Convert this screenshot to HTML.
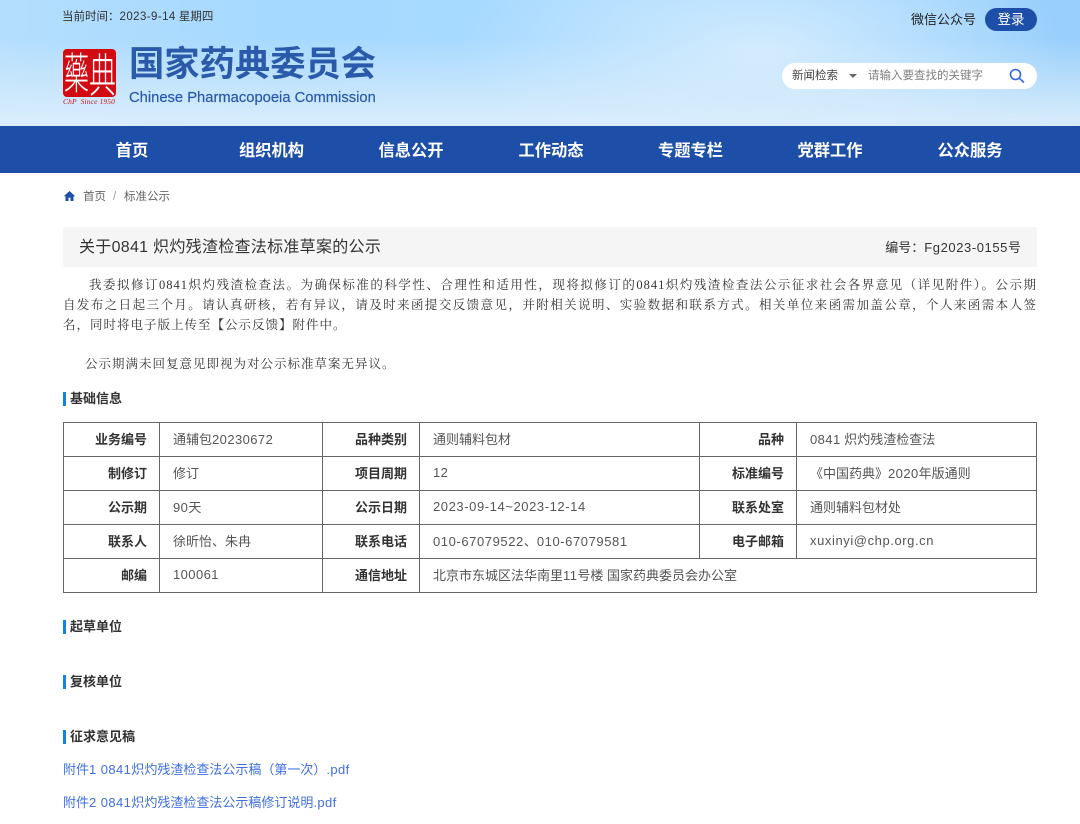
<!DOCTYPE html>
<html lang="zh"><head><meta charset="utf-8"><title>关于0841 炽灼残渣检查法标准草案的公示</title>
<style>
*{margin:0;padding:0;box-sizing:border-box}
html,body{width:1080px;height:824px;overflow:hidden;background:#fff}
body{position:relative;font-family:"Liberation Sans","Noto Sans CJK SC",sans-serif;color:#333}
.a{position:absolute;white-space:nowrap}
#hd{position:absolute;left:0;top:0;width:1080px;height:126px;background:linear-gradient(180deg,rgba(220,237,251,0) 30%,rgba(220,238,251,.9) 95%),radial-gradient(ellipse 300px 130px at 760px 50px,#d2ebfe 0,rgba(210,235,254,0) 100%),linear-gradient(90deg,#b4defd 0,#a6d9ff 25%,#a8daff 60%,#98cffb 100%)}
#nav{position:absolute;left:0;top:126px;width:1080px;height:47px;background:#1d4fa9}
#nav span{position:absolute;top:0;width:140px;text-align:center;line-height:50px;color:#fff;font-size:16.25px;font-weight:700}
.p{position:absolute;left:63px;width:974px;font-family:"Liberation Serif","Noto Serif CJK SC",serif;font-size:12.5px;letter-spacing:1px;color:#333;line-height:20px}
.h{position:absolute;left:63px;height:14px;border-left:3px solid #1a7fe0;padding-left:4px;font-size:13px;font-weight:700;line-height:14px;color:#333;white-space:nowrap}
table{position:absolute;left:63px;top:422px;width:973px;height:171px;border-collapse:collapse;table-layout:fixed;font-size:13px;color:#555}
td{border:1px solid #666;height:34px;padding:0 12px 2px 13px;white-space:nowrap}
td.k{font-weight:700;text-align:right;color:#333}
u{text-decoration:none;letter-spacing:.42px}
u.w{letter-spacing:.58px}
.l{position:absolute;left:63px;font-size:13px;color:#3f6fe0;white-space:nowrap}
</style></head><body>
<div id="hd"></div>
<div class="a" style="left:62px;top:9px;font-size:11.5px;line-height:16px;color:#333">当前时间：<u>2023-9-14</u> 星期四</div>
<div class="a" style="left:63px;top:49px;width:53px;height:48px;background:#d20a12;border-radius:4px"></div>
<div class="a" style="left:64px;top:60px;width:26px;font-size:25px;line-height:25px;color:#fff;font-family:'Noto Sans CJK SC',sans-serif;font-weight:300;transform:scaleY(1.75);transform-origin:50% 50%">藥</div>
<div class="a" style="left:89px;top:60px;width:27px;font-size:27px;line-height:25px;color:#fff;font-family:'Noto Sans CJK SC',sans-serif;font-weight:300;transform:scaleY(1.7);transform-origin:50% 50%">典</div>
<div class="a" style="left:63px;top:98px;font-family:'Liberation Serif',serif;font-style:italic;font-size:7.5px;letter-spacing:.12px;line-height:8px;color:#c8141c">ChP&nbsp; Since 1950</div>
<div class="a" style="left:129px;top:44px;font-size:35.3px;line-height:42px;font-weight:700;color:#2a5aa9">国家药典委员会</div>
<div class="a" style="left:129px;top:90px;font-size:14.75px;line-height:16px;color:#2a5aa9;-webkit-text-stroke:.2px #2a5aa9">Chinese Pharmacopoeia Commission</div>
<div class="a" style="left:911px;top:11px;font-size:13px;line-height:18px;color:#222">微信公众号</div>
<div class="a" style="left:985px;top:8px;width:52px;height:23px;border-radius:12px;background:#1d4fa9;color:#fff;font-size:13.5px;line-height:23px;text-align:center">登录</div>
<div class="a" style="left:782px;top:63px;width:255px;height:26px;border-radius:13px;background:#fff"></div>
<div class="a" style="left:792px;top:68px;font-size:11.5px;line-height:16px;color:#444">新闻检索</div>
<div class="a" style="left:849px;top:74px;width:0;height:0;border-left:4px solid transparent;border-right:4px solid transparent;border-top:4px solid #666"></div>
<div class="a" style="left:868px;top:68px;font-size:11.5px;line-height:16px;color:#808080">请输入要查找的关键字</div>
<svg class="a" style="left:1008px;top:67px" width="18" height="18" viewBox="0 0 18 18" fill="none" stroke="#3467dc" stroke-width="1.6"><circle cx="7.5" cy="7.5" r="5"/><path d="M11.2 11.2L16 15.5"/></svg>
<div id="nav"><span style="left:62px">首页</span><span style="left:201.5px">组织机构</span><span style="left:341px">信息公开</span><span style="left:481px">工作动态</span><span style="left:620.5px">专题专栏</span><span style="left:760px">党群工作</span><span style="left:900px">公众服务</span></div>
<svg class="a" style="left:63px;top:190px" width="13" height="12" viewBox="0 0 13 12"><path d="M6.5 1L.8 6.2h1.7V11h3V7.6h2V11h3V6.2h1.7z" fill="#1d4fa9"/></svg>
<div class="a" style="left:83px;top:189px;font-size:11.5px;line-height:16px;color:#666">首页</div>
<div class="a" style="left:113px;top:189px;font-size:11.5px;line-height:16px;color:#999">/</div>
<div class="a" style="left:124px;top:189px;font-size:11.5px;line-height:16px;color:#666">标准公示</div>
<div class="a" style="left:63px;top:227px;width:974px;height:40px;background:#f5f5f5;border-radius:2px"></div>
<div class="a" style="left:79px;top:237px;font-size:16px;line-height:22px;color:#333;letter-spacing:.29px">关于0841 炽灼残渣检查法标准草案的公示</div>
<div class="a" style="right:59px;top:238px;font-size:13px;line-height:20px;color:#333">编号：<u class="w">Fg2023-0155</u>号</div>
<div class="p" style="top:275px;text-align:justify;text-align-last:justify;text-indent:26px">我委拟修订0841炽灼残渣检查法。为确保标准的科学性、合理性和适用性，现将拟修订的0841炽灼残渣检查法公示征求社会各界意见（详见附件）。公示期</div>
<div class="p" style="top:295px;text-align:justify;text-align-last:justify">自发布之日起三个月。请认真研核，若有异议，请及时来函提交反馈意见，并附相关说明、实验数据和联系方式。相关单位来函需加盖公章，个人来函需本人签</div>
<div class="p" style="top:315px">名，同时将电子版上传至【公示反馈】附件中。</div>
<div class="p" style="top:354px;left:85px;width:auto;white-space:nowrap">公示期满未回复意见即视为对公示标准草案无异议。</div>
<div class="h" style="top:392px">基础信息</div>
<table><colgroup><col style="width:96px"><col style="width:163px"><col style="width:97px"><col style="width:280px"><col style="width:97px"><col style="width:240px"></colgroup>
<tr><td class="k">业务编号</td><td>通辅包<u>20230672</u></td><td class="k">品种类别</td><td>通则辅料包材</td><td class="k">品种</td><td><u>0841</u> 炽灼残渣检查法</td></tr>
<tr><td class="k">制修订</td><td>修订</td><td class="k">项目周期</td><td><u>12</u></td><td class="k">标准编号</td><td>《中国药典》<u>2020</u>年版通则</td></tr>
<tr><td class="k">公示期</td><td><u>90</u>天</td><td class="k">公示日期</td><td><u class="w">2023-09-14~2023-12-14</u></td><td class="k">联系处室</td><td>通则辅料包材处</td></tr>
<tr><td class="k">联系人</td><td>徐昕怡、朱冉</td><td class="k">联系电话</td><td><u class="w">010-67079522</u>、<u class="w">010-67079581</u></td><td class="k">电子邮箱</td><td><u class="w">xuxinyi@chp.org.cn</u></td></tr>
<tr><td class="k">邮编</td><td><u>100061</u></td><td class="k">通信地址</td><td colspan="3">北京市东城区法华南里<u>11</u>号楼 国家药典委员会办公室</td></tr>
</table>
<div class="h" style="top:620px">起草单位</div>
<div class="h" style="top:675px">复核单位</div>
<div class="h" style="top:730px">征求意见稿</div>
<div class="l" style="top:761px;line-height:18px">附件<u>1 0841</u>炽灼残渣检查法公示稿（第一次）<u>.pdf</u></div>
<div class="l" style="top:794px;line-height:18px">附件<u>2 0841</u>炽灼残渣检查法公示稿修订说明<u>.pdf</u></div>
</body></html>
